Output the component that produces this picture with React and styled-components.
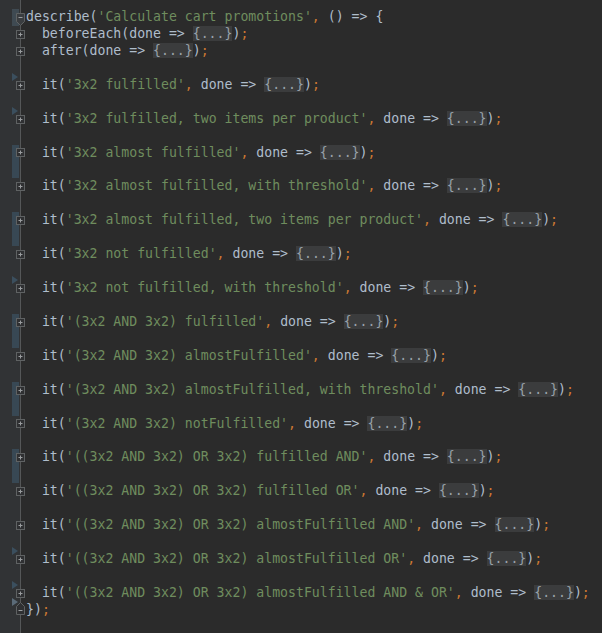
import React from "react";
import styled, { createGlobalStyle } from "styled-components";

const LINE = 16.94;

const Global = createGlobalStyle`
  html, body { margin: 0; padding: 0; background: #2b2b2b; }
  body { overflow: hidden; }
`;

const Editor = styled.div`
  display: flex;
  min-height: 633px;
  background: #2b2b2b;
`;

const Gutter = styled.div`
  width: 20px;
  flex: none;
  background: #313335;
  border-right: 1px solid #555758;
  padding-top: 9px;
  box-sizing: content-box;
`;

const GutterCell = styled.div`
  position: relative;
  height: ${LINE}px;
`;

const ChangeBar = styled.div`
  position: absolute;
  left: 12px;
  width: 7px;
  top: 0;
  bottom: 0;
  background: ${(p) => (p.$light ? "#3f4a52" : "#384854")};
`;

const Triangle = styled.div`
  position: absolute;
  left: 12px;
  top: -4px;
  width: 0;
  height: 0;
  border-top: 4px solid transparent;
  border-bottom: 4px solid transparent;
  border-left: 6px solid ${(p) => (p.$light ? "#5b6b78" : "#3b4f5e")};
`;

const FoldIcon = styled.svg`
  position: absolute;
  left: 16px;
  top: ${(p) => p.$top}px;
  overflow: visible;
`;

const CodeColumn = styled.div`
  flex: 1;
  padding: 9px 0 0 5px;
  font-family: "DejaVu Sans Mono", "Liberation Mono", monospace;
  font-size: 13.2px;
  color: #afbdcb;
`;

const CodeLine = styled.div`
  height: ${LINE}px;
  line-height: ${LINE}px;
  white-space: pre;
`;

const Str = styled.span`
  color: #6f8d5e;
`;

const Punct = styled.span`
  color: #cc7832;
`;

const Folded = styled.span`
  background: #3b3c3d;
  color: #98a1a9;
`;

const itNames = [
  "3x2 fulfilled",
  "3x2 fulfilled, two items per product",
  "3x2 almost fulfilled",
  "3x2 almost fulfilled, with threshold",
  "3x2 almost fulfilled, two items per product",
  "3x2 not fulfilled",
  "3x2 not fulfilled, with threshold",
  "(3x2 AND 3x2) fulfilled",
  "(3x2 AND 3x2) almostFulfilled",
  "(3x2 AND 3x2) almostFulfilled, with threshold",
  "(3x2 AND 3x2) notFulfilled",
  "((3x2 AND 3x2) OR 3x2) fulfilled AND",
  "((3x2 AND 3x2) OR 3x2) fulfilled OR",
  "((3x2 AND 3x2) OR 3x2) almostFulfilled AND",
  "((3x2 AND 3x2) OR 3x2) almostFulfilled OR",
  "((3x2 AND 3x2) OR 3x2) almostFulfilled AND & OR",
];

const lines = [];
lines.push({
  fold: "open",
  code: (
    <>
      describe(<Str>'Calculate cart promotions'</Str>
      <Punct>,</Punct> () =&gt; {"{"}
    </>
  ),
});
lines.push({
  fold: "plus",
  code: (
    <>
      {"  beforeEach(done => "}
      <Folded>{"{...}"}</Folded>)<Punct>;</Punct>
    </>
  ),
});
lines.push({
  fold: "plus",
  code: (
    <>
      {"  after(done => "}
      <Folded>{"{...}"}</Folded>)<Punct>;</Punct>
    </>
  ),
});
itNames.forEach((name) => {
  lines.push({ code: "" });
  lines.push({
    fold: "plus",
    code: (
      <>
        {"  it("}
        <Str>'{name}'</Str>
        <Punct>,</Punct>
        {" done => "}
        <Folded>{"{...}"}</Folded>)<Punct>;</Punct>
      </>
    ),
  });
});
lines.push({
  fold: "close",
  code: (
    <>
      {"}"})<Punct>;</Punct>
    </>
  ),
});

const bars = { 0: "light", 8: 1, 9: 1, 12: 1, 13: 1, 18: 1, 19: 1, 22: 1, 23: 1, 26: 1, 27: 1 };
const triangles = { 4: 1, 6: 1, 16: 1, 32: 1, 34: 1, 35: "light" };

function Fold({ kind }) {
  const mid = LINE / 2;
  if (kind === "plus") {
    return (
      <FoldIcon $top={mid - 4.5} width="9" height="9" viewBox="0 0 9 9">
        <rect x="0.5" y="0.5" width="8" height="8" fill="#2f3032" stroke="#5f6263" />
        <path d="M2.5 4.5h4M4.5 2.5v4" stroke="#9a9d9f" strokeWidth="1" />
      </FoldIcon>
    );
  }
  if (kind === "open") {
    return (
      <FoldIcon $top={mid - 4.5} width="9" height="13" viewBox="0 0 9 13">
        <path d="M0.5 0.5h8v8l-4 4l-4 -4z" fill="#3a3d40" stroke="#5f6263" />
        <path d="M2.5 4.5h4" stroke="#9a9d9f" strokeWidth="1" />
      </FoldIcon>
    );
  }
  return (
    <FoldIcon $top={mid - 8.5} width="9" height="13" viewBox="0 0 9 13">
      <path d="M4.5 0.5l4 4v8h-8v-8z" fill="#2f3032" stroke="#5f6263" />
      <path d="M2.5 8.5h4" stroke="#9a9d9f" strokeWidth="1" />
    </FoldIcon>
  );
}

export default function App() {
  return (
    <>
      <Global />
      <Editor>
        <Gutter>
          {lines.map((l, i) => (
            <GutterCell key={i}>
              {bars[i] && <ChangeBar $light={bars[i] === "light"} />}
              {triangles[i] && <Triangle $light={triangles[i] === "light"} />}
              {l.fold && <Fold kind={l.fold} />}
            </GutterCell>
          ))}
        </Gutter>
        <CodeColumn>
          {lines.map((l, i) => (
            <CodeLine key={i}>{l.code}</CodeLine>
          ))}
        </CodeColumn>
      </Editor>
    </>
  );
}
